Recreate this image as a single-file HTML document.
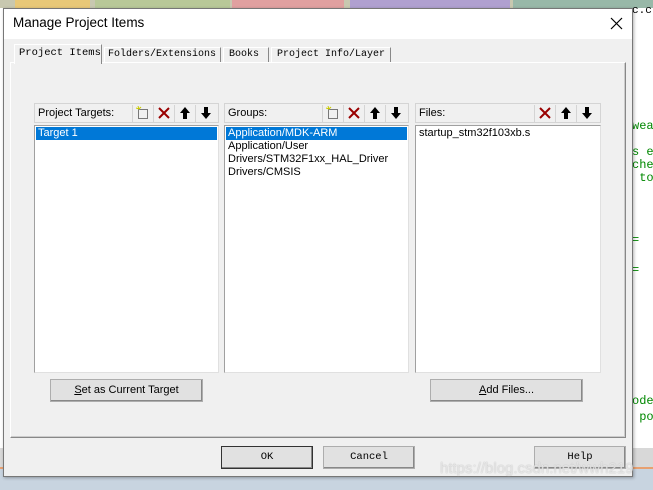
<!DOCTYPE html>
<html><head><style>
*{box-sizing:border-box;margin:0;padding:0}
body{width:653px;height:490px;overflow:hidden;background:#fff;position:relative;font-family:"Liberation Sans",sans-serif;font-size:11px;color:#000}
.a{position:absolute}
.m{font-family:"Liberation Mono",monospace;font-size:10px}
.btn{position:absolute;background:#e1e1e1;border:1px solid #adadad;box-shadow:inset -1px -1px 0 #888;text-align:center;font-size:11px}
.hdr{position:absolute;height:20px;background:#f0f0f0;border:1px solid #d4d4d4;padding:3px 3px;font-size:11px}
.ib{position:absolute;top:1px;width:20px;height:17px;border-left:1px solid #d4d4d4}
.ib svg{position:absolute;left:3px;top:1px}
.lst{position:absolute;background:#fff;border:1px solid #a0a0a0;border-right-color:#e0e0e0;border-bottom-color:#e0e0e0;top:125px;height:248px;font-size:11px}
.sel{background:#0078d7;color:#fff;padding-left:2px;height:13px;line-height:13px}
.it{padding-left:2px;height:13px;line-height:13px}
</style></head><body>
<div class="a" style="left:0;top:0;width:653px;height:8px;background:#c8c8b0"></div>
<div class="a" style="left:15px;top:0;width:75px;height:8px;background:#e8c878"></div>
<div class="a" style="left:95px;top:0;width:135px;height:8px;background:#b8c898"></div>
<div class="a" style="left:232px;top:0;width:112px;height:8px;background:#e0a0a0"></div>
<div class="a" style="left:350px;top:0;width:160px;height:8px;background:#b0a0d0"></div>
<div class="a" style="left:513px;top:0;width:140px;height:8px;background:#98b8a8"></div>
<div class="a" style="left:632px;top:8px;width:21px;height:460px;background:#fff"></div>
<div class="a m" style="left:632px;top:5px;color:#000;font-size:11px">c.c</div>
<div class="a m" style="left:632px;top:120px;color:#080;font-size:12px;line-height:13px">wea<br><br>s e<br>che<br>&nbsp;to</div>
<div class="a m" style="left:632px;top:233px;color:#080;font-size:12px">=</div>
<div class="a m" style="left:632px;top:263px;color:#080;font-size:12px">=</div>
<div class="a m" style="left:632px;top:393px;color:#080;font-size:12px;line-height:16px">ode<br>&nbsp;po</div>
<div class="a" style="left:0;top:448px;width:653px;height:20px;background:#d8d8d8"></div>
<div class="a" style="left:0;top:467px;width:653px;height:2px;background:#e8a070"></div>
<div class="a" style="left:0;top:469px;width:653px;height:21px;background:#c8d4e0"></div>
<div class="a" style="left:3px;top:8px;width:630px;height:469px;background:#f0f0f0;border:1px solid #777;box-shadow:1px 1px 3px rgba(0,0,0,.3)">
<div class="a" style="left:0;top:0;width:628px;height:30px;background:#fff"></div>
<div class="a" style="left:9px;top:6px;font-family:'Liberation Sans',sans-serif;font-size:13.5px">Manage Project Items</div>
<svg class="a" style="left:606px;top:8px" width="13" height="13"><path d="M1 1L12 12M12 1L1 12" stroke="#000" stroke-width="1.2"/></svg>
</div>
<div class="a" style="left:10px;top:62px;width:616px;height:376px;border:1px solid #fff;border-right-color:#888;border-bottom-color:#888;box-shadow:inset -1px -1px 0 #ccc"></div>
<div class="a m" style="left:14px;top:44px;width:88px;height:20px;background:#f0f0f0;border:1px solid #fff;border-right-color:#888;border-bottom:none;padding:2px 0 0 4px;font-size:10.5px">Project Items</div>
<div class="a m" style="left:104px;top:47px;width:117px;height:15px;border:1px solid #fff;border-right-color:#888;border-bottom:none;padding:1px 0 0 3px">Folders/Extensions</div>
<div class="a m" style="left:223px;top:47px;width:46px;height:15px;border:1px solid #fff;border-right-color:#888;border-bottom:none;padding:1px 0 0 5px">Books</div>
<div class="a m" style="left:271px;top:47px;width:120px;height:15px;border:1px solid #fff;border-right-color:#888;border-bottom:none;padding:1px 0 0 5px">Project Info/Layer</div>

<div class="hdr" style="left:34px;top:103px;width:185px">Project Targets:
<div class="ib" style="left:97px"><svg width="14" height="14"><rect x="2.5" y="3.5" width="9" height="9" fill="none" stroke="#000" stroke-dasharray="1 1"/><path d="M2 0L3 3M0 2L3 3M5 1L3 3" stroke="#cc0" stroke-width="1"/></svg></div>
<div class="ib" style="left:118px"><svg width="14" height="14"><path d="M2 2L12 12M12 2L2 12" stroke="#900" stroke-width="2"/></svg></div>
<div class="ib" style="left:139px"><svg width="14" height="14"><path d="M7 1L2 7H5V13H9V7H12Z" fill="#000"/></svg></div>
<div class="ib" style="left:160px"><svg width="14" height="14"><path d="M7 13L2 7H5V1H9V7H12Z" fill="#000"/></svg></div></div>
<div class="hdr" style="left:224px;top:103px;width:185px">Groups:
<div class="ib" style="left:97px"><svg width="14" height="14"><rect x="2.5" y="3.5" width="9" height="9" fill="none" stroke="#000" stroke-dasharray="1 1"/><path d="M2 0L3 3M0 2L3 3M5 1L3 3" stroke="#cc0" stroke-width="1"/></svg></div>
<div class="ib" style="left:118px"><svg width="14" height="14"><path d="M2 2L12 12M12 2L2 12" stroke="#900" stroke-width="2"/></svg></div>
<div class="ib" style="left:139px"><svg width="14" height="14"><path d="M7 1L2 7H5V13H9V7H12Z" fill="#000"/></svg></div>
<div class="ib" style="left:160px"><svg width="14" height="14"><path d="M7 13L2 7H5V1H9V7H12Z" fill="#000"/></svg></div></div>
<div class="hdr" style="left:415px;top:103px;width:186px">Files:
<div class="ib" style="left:118px"><svg width="14" height="14"><path d="M2 2L12 12M12 2L2 12" stroke="#900" stroke-width="2"/></svg></div>
<div class="ib" style="left:139px"><svg width="14" height="14"><path d="M7 1L2 7H5V13H9V7H12Z" fill="#000"/></svg></div>
<div class="ib" style="left:160px"><svg width="14" height="14"><path d="M7 13L2 7H5V1H9V7H12Z" fill="#000"/></svg></div></div>

<div class="lst" style="left:34px;width:185px;padding:1px"><div class="sel">Target 1</div></div>
<div class="lst" style="left:224px;width:185px;padding:1px"><div class="sel">Application/MDK-ARM</div><div class="it">Application/User</div><div class="it">Drivers/STM32F1xx_HAL_Driver</div><div class="it">Drivers/CMSIS</div></div>
<div class="lst" style="left:415px;width:186px;padding:1px"><div class="it">startup_stm32f103xb.s</div></div>

<div class="btn" style="left:50px;top:379px;width:153px;height:23px;line-height:21px"><u>S</u>et as Current Target</div>
<div class="btn" style="left:430px;top:379px;width:153px;height:23px;line-height:21px"><u>A</u>dd Files...</div>
<div class="btn m" style="left:221px;top:446px;width:92px;height:23px;line-height:21px;border-color:#333;font-size:10.5px">OK</div>
<div class="btn m" style="left:323px;top:446px;width:92px;height:23px;line-height:21px;font-size:10.5px">Cancel</div>
<div class="btn m" style="left:534px;top:446px;width:92px;height:23px;line-height:21px;font-size:10.5px">Help</div>
<div class="a" style="left:440px;top:460px;color:rgba(255,255,255,.6);font-size:15px;text-shadow:0 0 1px #aaa">https://blog.csdn.net/wwh219</div>
</body></html>
